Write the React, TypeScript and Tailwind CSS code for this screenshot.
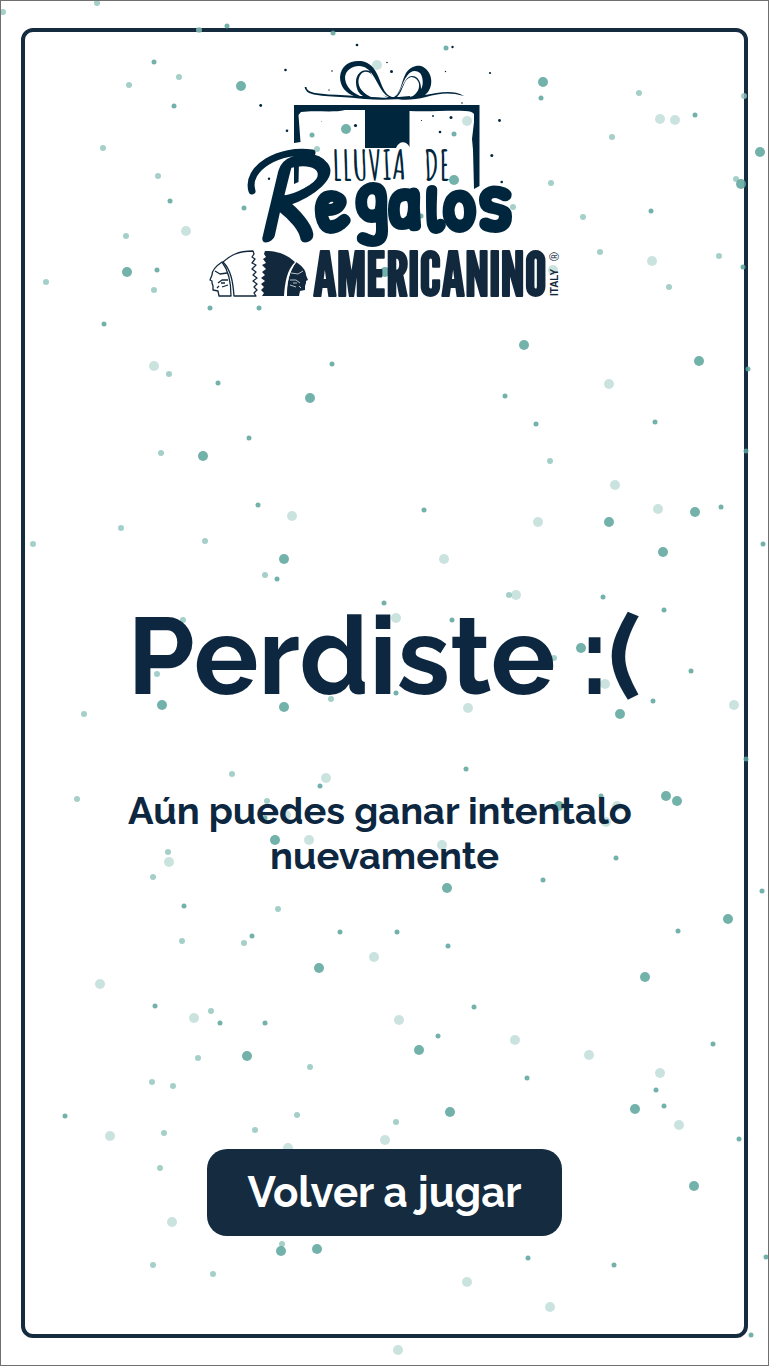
type Dot = [number, number];

const smallDots: Dot[] = [
  [227, 26], [333, 33], [154, 62], [174, 106], [170, 201], [244, 208], [157, 270], [210, 308], [259, 308],
  [104, 324], [312, 135], [446, 48], [541, 98], [695, 115], [454, 134], [651, 211], [743, 267], [421, 216],
  [332, 364], [218, 383], [748, 369], [505, 396], [536, 424], [655, 422], [249, 438], [746, 451], [258, 505],
  [424, 510], [721, 507], [763, 544], [277, 579], [384, 603], [603, 597], [664, 610], [452, 620], [691, 671],
  [396, 693], [653, 701], [466, 769], [746, 759], [320, 786], [616, 858], [543, 880], [184, 906], [762, 891],
  [340, 932], [397, 932], [252, 936], [448, 946], [678, 931], [155, 1006], [474, 1007], [220, 1023],
  [265, 1023], [438, 1036], [713, 1044], [601, 796], [265, 818], [527, 1078], [656, 1090], [664, 1106],
  [65, 1116], [739, 1139], [528, 1258], [614, 1265], [766, 1257], [751, 1335],
];

const mediumDots: Dot[] = [
  [3, 12], [97, 3], [199, 30], [179, 77], [129, 85], [103, 148], [158, 176], [126, 236], [46, 282], [154, 290],
  [317, 149], [639, 93], [744, 96], [612, 137], [551, 183], [513, 207], [583, 217], [600, 252], [719, 256],
  [669, 287], [736, 179], [169, 374], [161, 453], [550, 461], [121, 528], [33, 544], [205, 541], [265, 575],
  [509, 595], [183, 620], [554, 658], [157, 674], [331, 699], [84, 714], [232, 774], [77, 799], [267, 801],
  [168, 852], [153, 877], [278, 909], [182, 941], [244, 943], [211, 1011], [172, 810], [198, 1058],
  [310, 1067], [152, 1082], [173, 1086], [297, 1115], [396, 1122], [255, 1130], [164, 1133], [160, 1168],
  [282, 1244], [153, 1265], [213, 1274],
];

const largeDots: Dot[] = [
  [241, 86], [127, 272], [346, 129], [385, 272], [543, 82], [760, 152], [741, 184], [454, 180], [524, 345],
  [699, 361], [310, 398], [203, 456], [609, 522], [695, 512], [284, 559], [663, 552], [581, 648], [162, 705],
  [284, 707], [620, 714], [666, 796], [677, 801], [275, 840], [447, 888], [728, 919], [319, 968], [645, 977],
  [559, 806], [247, 1056], [419, 1050], [450, 1112], [635, 1109], [694, 1186], [317, 1249], [281, 1251],
];

const paleDots: Dot[] = [
  [377, 65], [186, 231], [660, 119], [675, 120], [467, 121], [652, 261], [553, 270], [154, 366], [609, 384],
  [615, 485], [658, 509], [292, 516], [538, 522], [444, 559], [516, 595], [396, 618], [605, 684], [468, 708],
  [734, 705], [326, 778], [309, 840], [442, 845], [169, 862], [374, 957], [100, 984], [194, 1018],
  [399, 1020], [515, 1040], [286, 815], [606, 822], [617, 806], [589, 1055], [660, 1073], [679, 1125],
  [110, 1136], [385, 1140], [288, 1148], [172, 1222], [467, 1282], [550, 1307], [398, 1350],
];

function DotLayer({ dots, r, fill, opacity }: { dots: Dot[]; r: number; fill: string; opacity: number }) {
  return (
    <g fill={fill} fillOpacity={opacity}>
      {dots.map(([x, y]) => (
        <circle key={`${x}-${y}`} cx={x} cy={y} r={r} />
      ))}
    </g>
  );
}

function Confetti() {
  return (
    <svg
      className="pointer-events-none absolute inset-0 h-full w-full"
      viewBox="1 1 767 1364"
      preserveAspectRatio="xMidYMid slice"
      aria-hidden="true"
    >
      <DotLayer dots={paleDots} r={5} fill="#c8e2dd" opacity={0.95} />
      <DotLayer dots={mediumDots} r={3} fill="#8fc4bb" opacity={0.8} />
      <DotLayer dots={largeDots} r={5} fill="#5aa59b" opacity={0.85} />
      <DotLayer dots={smallDots} r={2.5} fill="#5aa59b" opacity={0.85} />
    </svg>
  );
}

const splatter: [number, number, number][] = [
  [357, 45, 1.3], [285.5, 70, 1.3], [332, 71, 0.8], [329, 90, 0.7], [391.5, 71.5, 1.5], [387, 62.5, 0.8],
  [260.7, 105.5, 1.4], [287, 130.7, 1.3], [355.5, 125.5, 1.6], [321.5, 121.3, 0.4], [371.5, 92, 0.5],
  [269, 178.7, 1.2], [452.5, 47, 1.2], [490, 73, 1.1], [445.5, 71.5, 0.7], [462, 103, 0.8],
  [499.5, 120.5, 1.4], [451, 117.5, 1.5], [440, 132, 1.3], [433, 116, 0.9], [421.5, 120.5, 0.6],
  [491.8, 155.5, 1.5], [501.7, 182, 1.3],
];

function ProfileShapes() {
  return (
    <>
      <path d="M223 262 C230 256 237 251 253 251 L254 254 L252 257 L255 259 L252 263 L256 265 L252 269 L256 272 L253 275 L257 278 L253 281 L257 284 L254 287 L257 290 L254 293 L256 296 L234 296 C233 282 231 270 223 262 Z" />
      <path d="M222 262 C229 271 231 283 231 296 L219 296 L218 291 L213 290 L213 286 L212 283 L212 281 L210 280 L212 275 C212 270 216 266 222 262 Z" />
    </>
  );
}

function ProfileFace() {
  return (
    <path d="M215 271 L220 274 L227 273 M218 283 L222 280 L228 280 M221 283 L225 283 M222 287 L228 285 M217 288 L219 286" />
  );
}

function Logo() {
  return (
    <svg className="h-[260px] w-[358px]" viewBox="206 40 358 260" role="img" aria-label="Lluvia de Regalos Americanino Italy">
      <g fill="#00263e">
        {splatter.map(([x, y, r]) => (
          <circle key={`${x}-${y}`} cx={x} cy={y} r={r} />
        ))}
        <path d="M294 105 H479.5 V186 L474 189 L473 150 L472 139 L474 122 L474 114 Q472 111 465 111 C450 110 430 112 409.5 111 V147 C407 141 399 140 396 148 L365 148 V110 H345 C333 113 315 110 301 112 L298.5 115 L300.5 142 L294 143 Z" />
        <path d="M294 162 L299 161 L298.500 182 L294 184 Z" />
        <path d="M392 98 C382 99 370 100 356 97 C345 93 340 86 340 77 C341 65 350 60 361 61 C375 63 378 76 383 88 Q386 95 392 97 L394 97 C401 93 401 82 406 73 C410 67 416 65 421 66 C432 70 434 84 428 92 L425 95 C438 93 452 89 464 96 C450 92 440 93 426 97 C414 100 402 101 392 98 Z" />
      </g>
      <g fill="#ffffff">
        <path d="M360 96 C349 91 345 84 345 77 C346 70 352 66 359 66 C371 66 375 80 383 92 Q386 96 389 97 C377 96 373 79 370 71 C361 68 356 75 356 82 C356 89 359 94 363 96 Z" />
        <path d="M394 97 C401 93 402 82 407 76 C411 70 416 70 420 73 C424 78 423 87 421 89 C421 82 418 76 412 76 C405 76 403 88 397 95 Z" />
        <path d="M371 97 C360 92 357 84 359 78 C361 71 367 70 371 74 C376 84 379 94 388 98 Z" />
        <path d="M397 97 C404 90 403 79 411 77 C421 78 422 90 413 96 C407 98 402 98 397 97 Z" />
      </g>
      <path d="M305.500 87 C306 97 329 94 365 98 Q386 100 410 97" fill="none" stroke="#00263e" strokeWidth="1.800" />
      <path d="M252 191 C245 168 280 148 312 153" fill="none" stroke="#00263e" strokeWidth="7" strokeLinecap="round" />
      <g fill="#00263e" stroke="#00263e" strokeLinejoin="round" fontFamily="'Patrick Hand', Lato, sans-serif">
        <text x="257" y="241" fontSize="130" fontStyle="italic" strokeWidth="2">R</text>
        <text strokeWidth="6">
          <tspan x="316" y="231" fontSize="84">e</tspan>
          <tspan x="354" y="220" fontSize="76">g</tspan>
          <tspan x="389" y="227" fontSize="78">a</tspan>
          <tspan x="427" y="231" fontSize="60">l</tspan>
          <tspan x="443" y="230" fontSize="80">o</tspan>
          <tspan x="477" y="230" fontSize="90">s</tspan>
        </text>
      </g>
      <text y="180" fontSize="40" fontWeight="700" fill="#00263e" fontFamily="'Amatic SC', 'Shadows Into Light', sans-serif">
        <tspan x="332">LLUVIA</tspan>
        <tspan x="424">DE</tspan>
      </text>
      <g fill="none" stroke="#12283d" strokeWidth="1.300" strokeLinejoin="round">
        <ProfileShapes />
        <ProfileFace />
      </g>
      <g transform="translate(518 0) scale(-1 1)">
        <g fill="#12283d">
          <ProfileShapes />
        </g>
        <path d="M222 262 C229 271 232 283 232 297" fill="none" stroke="#ffffff" strokeWidth="1" />
        <g fill="none" stroke="#b8c0c8" strokeWidth="1">
          <ProfileFace />
        </g>
      </g>
      <text x="313" y="296" fontSize="61" fill="#12283d" stroke="#12283d" strokeWidth="2" strokeLinejoin="round" fontFamily="'League Gothic', 'Bebas Neue', sans-serif">AMERICANINO</text>
      <text transform="translate(558 296) rotate(-90)" fontSize="10" fontWeight="700" fill="#12283d" fontFamily="'Liberation Sans', sans-serif">ITALY</text>
      <text transform="translate(559 261) rotate(-90)" fontSize="12" fill="#12283d" fontFamily="'Liberation Sans', sans-serif">®</text>
    </svg>
  );
}

export default function App() {
  return (
    <div className="relative flex min-h-screen flex-col border border-[#707070] bg-white px-5 py-[27px] font-[Raleway,Lato,sans-serif] text-[#0c273f]">
      <main className="flex flex-1 flex-col items-center rounded-xl border-4 border-[#142b40] px-20 pt-2 pb-[98px] text-center">
        <Confetti />
        <div className="relative">
          <Logo />
        </div>
        <h1 className="relative mt-72 text-[108px] leading-[136px] font-bold">Perdiste :(</h1>
        <p className="relative mt-16 text-[38px] leading-[45px] font-bold">
          Aún puedes ganar intentalo&nbsp;
          <br />
          nuevamente
        </p>
        <button
          type="button"
          className="relative mt-auto flex h-[87px] items-center rounded-[20px] bg-[#142b40] px-10 text-[42px] font-bold text-white"
        >
          Volver a jugar
        </button>
      </main>
    </div>
  );
}
